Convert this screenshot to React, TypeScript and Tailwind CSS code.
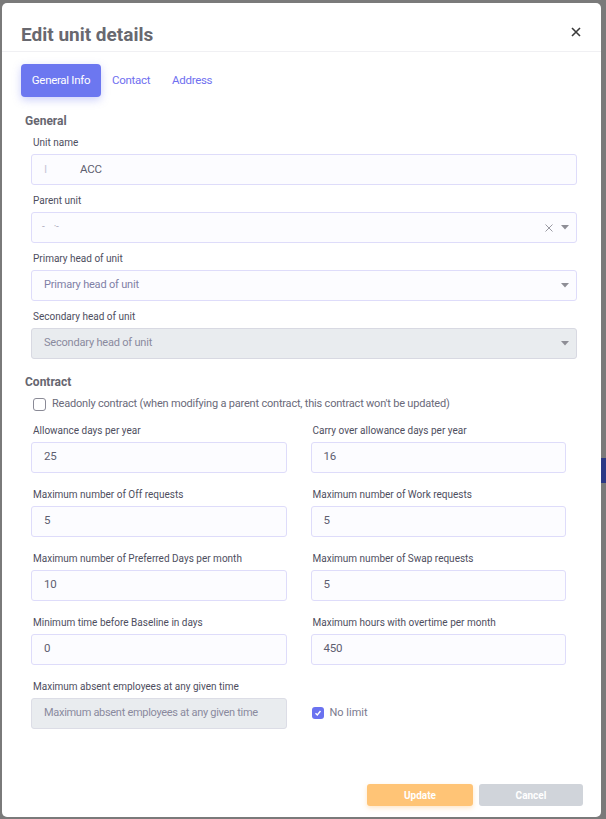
import React from "react";

const font = { fontFamily: "Roboto, 'Liberation Sans', sans-serif" };

function Label({ children }: { children: React.ReactNode }) {
  return <div className="text-[10px] leading-[12px] text-[#4e4e5e] mb-[5px] pl-[2px] whitespace-nowrap">{children}</div>;
}

function Input({ value, placeholder, disabled }: { value?: React.ReactNode; placeholder?: string; disabled?: boolean }) {
  return (
    <div
      className={
        "h-[31px] rounded-[3px] border flex items-center pl-[12px] text-[11.5px] tracking-[-0.2px] whitespace-nowrap overflow-hidden " +
        (disabled ? "bg-[#e9ecef] border-[#dcdde6] text-[#8a8a9e]" : "bg-[#fcfcff] border-[#dedcfa] text-[#5e5e70]")
      }
    >
      {value !== undefined ? value : <span className={disabled ? "text-[#8a8a9e] text-[11px] tracking-[-0.3px]" : "text-[#8585a8]"}>{placeholder}</span>}
    </div>
  );
}

function Caret() {
  return (
    <svg width="8" height="5" viewBox="0 0 8 5" className="ml-[6px]">
      <path d="M0 0 L8 0 L4 4.5 Z" fill="#8e8e96" />
    </svg>
  );
}

function Select({ value, placeholder, disabled, clear }: { value?: React.ReactNode; placeholder?: string; disabled?: boolean; clear?: boolean }) {
  return (
    <div
      className={
        "h-[31px] rounded-[3px] border flex items-center pl-[12px] pr-[7px] text-[11px] tracking-[-0.2px] " +
        (disabled ? "bg-[#e9ecef] border-[#d8d9e2]" : "bg-[#fcfcff] border-[#dedcfa]")
      }
    >
      <div className="flex-1">
        {value !== undefined ? value : <span className={disabled ? "text-[#8a8a9e]" : "text-[#8080a6]"}>{placeholder}</span>}
      </div>
      {clear && (
        <svg width="8" height="8" viewBox="0 0 8 8" className="mr-[2px]">
          <path d="M0.5 0.5 L7.5 7.5 M7.5 0.5 L0.5 7.5" stroke="#9a9aa2" strokeWidth="1" />
        </svg>
      )}
      <Caret />
    </div>
  );
}

function Field({ label, children }: { label: string; children: React.ReactNode }) {
  return (
    <div>
      <Label>{label}</Label>
      {children}
    </div>
  );
}

export default function App() {
  return (
    <div className="w-[606px] h-[819px] bg-[#7a7a7a] relative overflow-hidden" style={font}>
      <div className="absolute right-0 top-[458px] w-[5px] h-[25px] bg-[#2c3885]" />
      <div className="ml-[2px] pt-[3px] w-[599px]">
        <div className="bg-white rounded-[5px] h-[814px] flex flex-col">
          {/* header */}
          <div className="h-[49px] border-b border-[#f0f0f3] flex items-center pl-[19px] pr-[20px] pt-[10px]">
            <div className="flex-1 text-[19px] font-bold text-[#68686f] mt-[7px]">Edit unit details</div>
            <svg width="10" height="10" viewBox="0 0 10 10" className="-mt-[1px]">
              <path d="M1 1 L9 9 M9 1 L1 9" stroke="#3a3a3a" strokeWidth="1.6" />
            </svg>
          </div>
          {/* tabs */}
          <div className="flex items-center pl-[19px] pt-[12px]">
            <div className="w-[80px] h-[33px] rounded-[4px] bg-[#6c77f0] text-white text-[11.5px] flex items-center justify-center shadow-[0_3px_8px_rgba(108,119,240,0.35)] tracking-[-0.3px]">
              General Info
            </div>
            <div className="text-[11.5px] text-[#6f6ff0] tracking-[-0.3px] ml-[11px]">Contact</div>
            <div className="text-[11.5px] text-[#6f6ff0] tracking-[-0.3px] ml-[22px]">Address</div>
          </div>
          {/* General */}
          <div className="pl-[23px] mt-[15px] text-[12px] font-bold text-[#666670]">General</div>
          <div className="pl-[29px] pr-[24px] mt-[7px] flex flex-col gap-[10px]">
            <Field label="Unit name">
              <Input
                value={
                  <span>
                    <span className="text-[#c8c8d8]">I</span>
                    <span className="ml-[33px]">ACC</span>
                  </span>
                }
              />
            </Field>
            <Field label="Parent unit">
              <Select value={<span className="text-[#b0b0c0] text-[10px] -ml-[2px]">-&nbsp;&nbsp;&nbsp;&nbsp;·-</span>} clear />
            </Field>
            <Field label="Primary head of unit">
              <Select placeholder="Primary head of unit" />
            </Field>
            <Field label="Secondary head of unit">
              <Select placeholder="Secondary head of unit" disabled />
            </Field>
          </div>
          {/* Contract */}
          <div className="pl-[23px] mt-[14px] text-[12px] font-bold text-[#666670]">Contract</div>
          <div className="pl-[31px] mt-[5px] flex items-center gap-[6px]">
            <div className="w-[13px] h-[13px] rounded-[3px] border border-[#8a8a96] bg-white" />
            <span className="text-[11px] text-[#6a6a7a] tracking-[-0.2px]">
              Readonly contract (when modifying a parent contract, this contract won't be updated)
            </span>
          </div>
          <div className="pl-[29px] pr-[35px] mt-[12px] grid grid-cols-2 gap-x-[24px] gap-y-[16px]">
            <Field label="Allowance days per year">
              <Input value="25" />
            </Field>
            <Field label="Carry over allowance days per year">
              <Input value="16" />
            </Field>
            <Field label="Maximum number of Off requests">
              <Input value="5" />
            </Field>
            <Field label="Maximum number of Work requests">
              <Input value="5" />
            </Field>
            <Field label="Maximum number of Preferred Days per month">
              <Input value="10" />
            </Field>
            <Field label="Maximum number of Swap requests">
              <Input value="5" />
            </Field>
            <Field label="Minimum time before Baseline in days">
              <Input value="0" />
            </Field>
            <Field label="Maximum hours with overtime per month">
              <Input value="450" />
            </Field>
            <Field label="Maximum absent employees at any given time">
              <Input placeholder="Maximum absent employees at any given time" disabled />
            </Field>
            <div className="flex items-end">
              <div className="h-[31px] flex items-center gap-[6px] pl-[1px]">
                <div className="w-[12px] h-[12px] rounded-[3px] bg-[#6a72f0] flex items-center justify-center">
                  <svg width="8" height="8" viewBox="0 0 8 8">
                    <path d="M1.5 4.2 L3.3 6 L6.5 2" stroke="white" strokeWidth="1.4" fill="none" />
                  </svg>
                </div>
                <span className="text-[11px] text-[#7a7a8e]">No limit</span>
              </div>
            </div>
          </div>
          <div className="flex-1" />
          <div className="flex justify-end gap-[6px] pr-[18px] pb-[11px]">
            <div className="w-[106px] h-[22px] rounded-[3px] bg-[#ffc476] text-white text-[10px] font-bold flex items-center justify-center shadow-[0_2px_5px_rgba(255,180,90,0.35)]">
              Update
            </div>
            <div className="w-[104px] h-[22px] rounded-[3px] bg-[#d0d4da] text-white text-[10px] font-bold flex items-center justify-center">
              Cancel
            </div>
          </div>
        </div>
      </div>
    </div>
  );
}
